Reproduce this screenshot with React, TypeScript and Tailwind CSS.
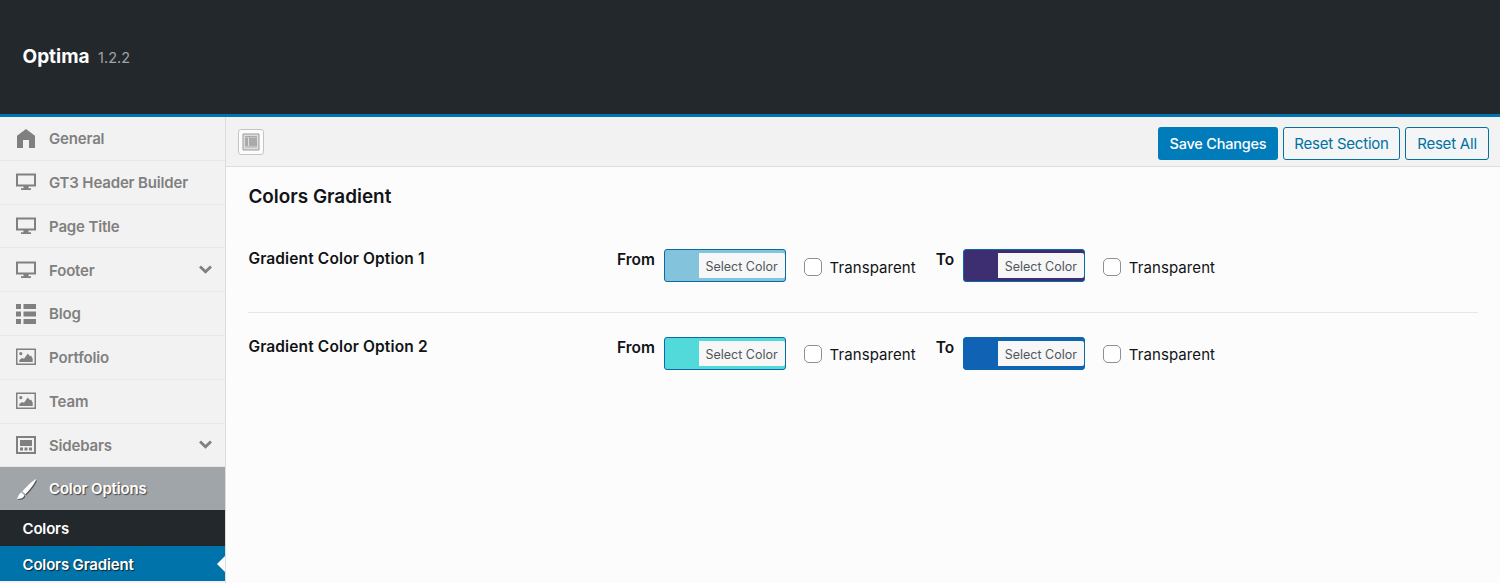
import { useState } from "react";

const icons: any = {
  home: <path d="M10 1L1 7.7V20h6v-8h6v8h6V7.7z" />,
  screen: (
    <path
      fillRule="evenodd"
      d="M0 1.500h20v13h-7.500v1.800h2.500v1.700H5v-1.700h2.500v-1.800H0zM2 3.500v9h16v-9z"
    />
  ),
  list: (
    <path d="M0 0h5v5H0zM7.5 0H20v5H7.5zM0 7.5h5v5H0zM7.5 7.5H20v5H7.5zM0 15h5v5H0zM7.5 15H20v5H7.5z" />
  ),
  picture: (
    <path
      fillRule="evenodd"
      d="M0 1.500h20V18H0zM1.500 3v13.500h17V3zM3.300 15v-2l2.700-2 2 .8 3.800-5.300 2.200 2.700 1-.7 1.700 3V15zM4.800 5a1.600 1.600 0 1 1 0 3.200 1.600 1.600 0 0 1 0-3.200z"
    />
  ),
  website: (
    <path
      fillRule="evenodd"
      d="M0 1h20v18H0zM2 3v14h16V3zM4 5h12v6H4zM4 12.500h3v3H4zM8.500 12.500h3v3h-3zM13 12.500h3v3h-3z"
    />
  ),
  brush: (
    <path d="M19.800.2c.4.500-.4 2.300-2 4.700-2.700 4-6 8-8.400 10.300L6.300 12.500C8.600 9.700 12.500 5.700 16 2.800c2-1.700 3.400-3 3.800-2.600zM5.500 13.500l2.800 2.500c-.3 2.500-2.600 4.200-7.800 3.800 2-1.100 2-5.400 5-6.300z" />
  ),
};

const menu = [
  { name: "General", icon: "home" },
  { name: "GT3 Header Builder", icon: "screen" },
  { name: "Page Title", icon: "screen" },
  { name: "Footer", icon: "screen", sub: true },
  { name: "Blog", icon: "list" },
  { name: "Portfolio", icon: "picture" },
  { name: "Team", icon: "picture" },
  { name: "Sidebars", icon: "website", sub: true },
];

const options = [
  { name: "Gradient Color Option 1", from: "#83c3db", to: "#3d2e72" },
  { name: "Gradient Color Option 2", from: "#52dada", to: "#1062b4" },
];

function Icon({ name }: { name: string }) {
  return (
    <svg className="size-5 shrink-0" viewBox="0 0 20 20" fill="currentColor">
      {icons[name]}
    </svg>
  );
}

function ColorField({ label, color }: { label: string; color: string }) {
  const [transparent, setTransparent] = useState(false);

  return (
    <div className="flex">
      <span className="mt-px h-5 text-[15.5px] leading-5 font-semibold">
        {label}
      </span>
      <button
        className="ml-[8.6px] flex h-[33px] w-[122px] justify-end rounded-[3px] border border-[#0a6aa8] pt-[3px]"
        style={{ backgroundColor: color }}
      >
        <span className="h-[25px] w-[86px] rounded-r-[2px] bg-[#f7f7f7] text-center text-[12.5px] leading-[27px] text-[#50575e]">
          Select Color
        </span>
      </button>
      <label className="ml-[18px] flex h-[35px] items-center gap-[8px] text-[15px] tracking-[0.08px]">
        <input
          type="checkbox"
          checked={transparent}
          onChange={() => setTransparent(!transparent)}
          className="size-[18px] appearance-none rounded-[5px] border border-[#8c8f94] bg-white checked:bg-[#0073aa]"
        />
        <span className="pt-[3px]">Transparent</span>
      </label>
    </div>
  );
}

function App() {
  return (
    <div className="h-[583px] overflow-hidden bg-[#fcfcfc] font-['Inter',sans-serif] text-[#111316]">
      <header className="flex h-[117px] items-baseline border-b-[3px] border-[#0074b0] bg-[#23282d] pt-[43px] pl-[22.5px]">
        <h1 className="text-[19px] leading-7 font-bold text-white">Optima</h1>
        <span className="ml-[8.5px] text-[14.5px] text-[#a0a3a6]">1.2.2</span>
      </header>

      <div className="flex h-[466px]">
        <aside className="w-[226px] shrink-0 border-r border-[#dcdcdc] bg-[#f2f2f2] text-[15px] font-semibold tracking-[-0.16px]">
          {menu.map((item) => (
            <div
              key={item.name}
              className="flex h-[43.8px] items-center border-b border-[#e7e7e7] pr-[13px] pl-[15.5px] text-[#808080]"
            >
              <Icon name={item.icon} />
              <span className="ml-[13.5px] grow pt-[2px]">{item.name}</span>
              {item.sub && (
                <svg
                  className="h-[9px] w-[13px]"
                  viewBox="0 0 13 9"
                  fill="none"
                  stroke="currentColor"
                  strokeWidth="2.8"
                >
                  <path d="M1 1.500l5.500 5.300L12 1.500" />
                </svg>
              )}
            </div>
          ))}
          <div className="flex h-[42.6px] items-center bg-[#a0a5aa] pl-[15.5px] text-white text-shadow-[1px_1px_1px_#444]">
            <span className="drop-shadow-[1px_1px_0px_#555]">
              <Icon name="brush" />
            </span>
            <span className="ml-[13.5px] pt-[2px]">Color Options</span>
          </div>
          <div className="h-[36px] bg-[#23282d] pl-[22.5px] leading-[37px] text-white">
            Colors
          </div>
          <div className="relative h-[35.5px] bg-[#0073aa] pl-[22.5px] leading-[37px] text-white text-shadow-[1px_1px_1px_#123]">
            Colors Gradient
            <span className="absolute top-[10px] right-0 border-y-8 border-r-8 border-y-transparent border-r-[#fcfcfc]"></span>
          </div>
        </aside>

        <main className="grow">
          <div className="flex h-[50px] items-center border-b border-[#dedede] bg-[#f2f2f2] pr-[11px] pl-[12px]">
            <button className="flex size-[26px] items-center justify-center rounded-[3px] border border-[#c4c4c4] bg-[#fcfcfc]">
              <svg className="size-[18px]" viewBox="0 0 18 18">
                <path d="M1 1h16v16H1z" fill="#dedede" stroke="#999" />
                <path d="M3 3h12v1.500H3zM3 5h3v8H3zM7 5h8v8H7zM3 13.500h12v1H3z" fill="#aaa" />
              </svg>
            </button>
            <div className="ml-auto flex gap-[5px] pt-[3px] text-[15px] tracking-[-0.22px] text-[#0071a1]">
              <button className="h-[33px] w-[120px] rounded-[3px] bg-[#007cba] pt-px text-[14.5px] font-medium text-white">
                Save Changes
              </button>
              <button className="h-[33px] w-[117px] rounded-[3px] border border-[#0071a1] bg-[#f3f5f6] pt-[2px]">
                Reset Section
              </button>
              <button className="h-[33px] w-[84px] rounded-[3px] border border-[#0071a1] bg-[#f3f5f6] pt-[2px]">
                Reset All
              </button>
            </div>
          </div>

          <div className="pr-[22px] pl-[22.4px]">
            <h2 className="pt-[16px] text-[18.9px] leading-7 font-semibold">
              Colors Gradient
            </h2>
            {options.map((option) => (
              <div
                key={option.name}
                className="flex h-[87.5px] border-b border-[#e7e7e7] pt-[24px] first-of-type:mt-[14px] last:border-0"
              >
                <h3 className="w-[368.6px] text-[15.5px] leading-5 font-semibold tracking-[0.13px]">
                  {option.name}
                </h3>
                <div className="flex gap-[20px]">
                  <ColorField label="From" color={option.from} />
                  <ColorField label="To" color={option.to} />
                </div>
              </div>
            ))}
          </div>
        </main>
      </div>
    </div>
  );
}

export default App;
